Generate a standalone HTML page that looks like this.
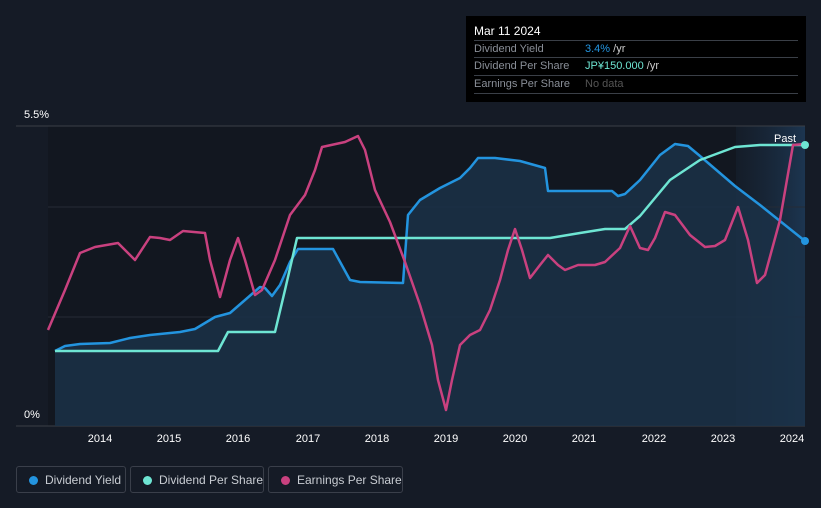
<!DOCTYPE html>
<html><head><meta charset="utf-8"><style>
html,body{margin:0;width:821px;height:508px;overflow:hidden}
body{background:#151b26;font-family:"Liberation Sans",sans-serif;position:relative}
.tt{position:absolute;left:466px;top:16px;width:340px;height:86px;background:#000;color:#fff;font-size:11px}
.tt .h{position:absolute;left:8px;top:8px;font-size:12px}
.row{position:absolute;left:8px;width:324px;height:17px;border-top:1px solid #3a3f47;color:#8a8f98;line-height:17px}
.row span{position:absolute;left:111px}
.lg{position:absolute;top:466px;height:27px;border:1px solid #3a3f4a;border-radius:3px;color:#c8ccd2;font-size:12px;line-height:26px;box-sizing:border-box;white-space:nowrap}
.lg i{position:absolute;left:12px;top:9px;width:9px;height:9px;border-radius:50%}
.lg b{font-weight:normal;position:absolute;left:28px}
.yr{position:absolute;top:433px;color:#fff;font-size:11px;width:40px;text-align:center}
</style></head><body>
<svg width="821" height="508" style="position:absolute;left:0;top:0">
<defs><linearGradient id="p" x1="0" x2="1"><stop offset="0" stop-color="#1a2a3d" stop-opacity="0.3"/><stop offset="1" stop-color="#1c3550"/></linearGradient></defs>
<rect x="48" y="126" width="757" height="300" fill="#121720"/>
<rect x="736" y="126" width="69" height="300" fill="url(#p)"/>
<line x1="16" y1="126" x2="805" y2="126" stroke="#3a3f47"/>
<line x1="48" y1="207" x2="805" y2="207" stroke="#252b36"/>
<line x1="48" y1="317" x2="805" y2="317" stroke="#252b36"/>
<line x1="16" y1="426" x2="805" y2="426" stroke="#3a3f47"/>
<polygon fill="#1b3148" opacity="0.85" points="55,426 55,351 65,346 80,344 110,343 130,338 150,335 180,332 195,329 215,317 230,313 245,300 260,287 265,288 272,296 280,285 290,262 298,249 333,249 350,280 360,282 403,283 408,215 420,200 440,188 460,178 470,168 478,158 495,158 520,161 545,168 548,191 612,191 618,196 625,194 640,180 660,155 675,144 688,146 700,156 735,186 760,205 805,241 805,426"/>
<polyline fill="none" stroke="#2394df" stroke-width="2.5" stroke-linejoin="round" points="55,351 65,346 80,344 110,343 130,338 150,335 180,332 195,329 215,317 230,313 245,300 260,287 265,288 272,296 280,285 290,262 298,249 333,249 350,280 360,282 403,283 408,215 420,200 440,188 460,178 470,168 478,158 495,158 520,161 545,168 548,191 612,191 618,196 625,194 640,180 660,155 675,144 688,146 700,156 735,186 760,205 805,241"/>
<polyline fill="none" stroke="#6ee5d3" stroke-width="2.5" stroke-linejoin="round" points="55,351 218,351 228,332 275,332 285,290 297,238 550,238 580,233 605,229 625,229 640,216 670,180 700,160 735,147 760,145 805,145"/>
<polyline fill="none" stroke="#c9417f" stroke-width="2.5" stroke-linejoin="round" points="48,330 65,290 80,253 95,247 118,243 135,260 150,237 160,238 170,240 183,231 205,233 210,260 220,297 230,260 238,238 245,260 255,295 262,290 275,260 290,215 305,195 315,170 322,147 345,142 358,136 365,150 375,190 390,222 405,262 420,305 432,345 438,380 446,410 452,380 460,345 470,335 480,330 490,310 500,280 508,250 515,229 522,250 530,278 540,265 548,255 558,265 565,270 578,265 595,265 605,262 620,248 630,226 640,248 648,250 655,238 665,212 675,215 690,235 705,247 715,246 725,240 738,207 748,240 757,283 765,275 780,220 793,145 805,144"/>
<circle cx="805" cy="145" r="4" fill="#6ee5d3"/>
<circle cx="805" cy="241" r="4" fill="#2394df"/>
<text x="774" y="142" fill="#fff" font-size="11" font-family="Liberation Sans">Past</text>
<text x="24" y="118" fill="#fff" font-size="11" font-family="Liberation Sans">5.5%</text>
<text x="24" y="418" fill="#fff" font-size="11" font-family="Liberation Sans">0%</text>
</svg>
<div class="yr" style="left:80px">2014</div><div class="yr" style="left:149px">2015</div><div class="yr" style="left:218px">2016</div><div class="yr" style="left:288px">2017</div><div class="yr" style="left:357px">2018</div><div class="yr" style="left:426px">2019</div><div class="yr" style="left:495px">2020</div><div class="yr" style="left:564px">2021</div><div class="yr" style="left:634px">2022</div><div class="yr" style="left:703px">2023</div><div class="yr" style="left:772px">2024</div>
<div class="tt"><div class="h">Mar 11 2024</div>
<div class="row" style="top:24px">Dividend Yield<span><em style="font-style:normal;color:#2394df">3.4%</em> <em style="font-style:normal;color:#ccc">/yr</em></span></div>
<div class="row" style="top:41px">Dividend Per Share<span><em style="font-style:normal;color:#6ee5d3">JP¥150.000</em> <em style="font-style:normal;color:#ccc">/yr</em></span></div>
<div class="row" style="top:59px;border-bottom:1px solid #3a3f47">Earnings Per Share<span style="color:#555">No data</span></div>
</div>
<div class="lg" style="left:16px;width:110px"><i style="background:#2394df"></i><b>Dividend Yield</b></div>
<div class="lg" style="left:130px;width:134px"><i style="background:#6ee5d3"></i><b>Dividend Per Share</b></div>
<div class="lg" style="left:268px;width:135px"><i style="background:#c9417f"></i><b>Earnings Per Share</b></div>
</body></html>
